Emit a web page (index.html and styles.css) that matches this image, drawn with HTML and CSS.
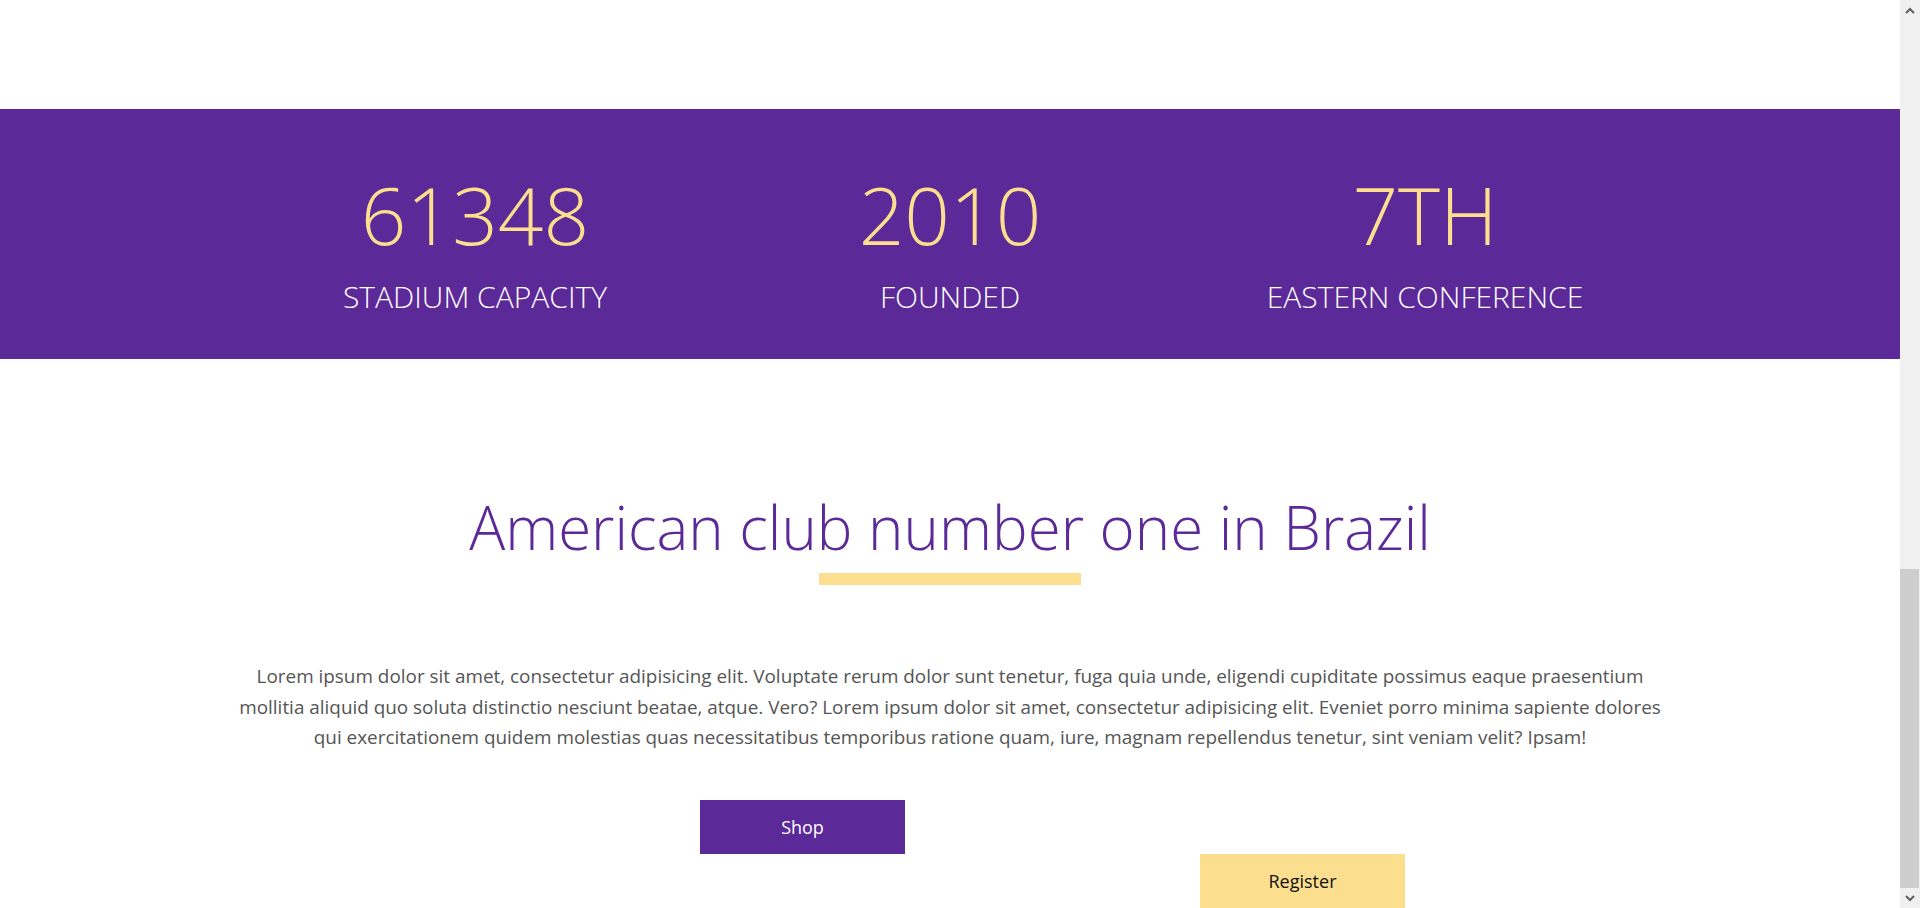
FILE: index.html
```html
<!DOCTYPE html>
<html lang="en">
<head>
<meta charset="utf-8">
<title>American club number one in Brazil</title>
<link rel="stylesheet" href="styles.css">
</head>
<body>
<main class="page">
  <section class="stats">
    <div class="stats-inner">
      <div class="stat">
        <span class="stat-value">61348</span>
        <span class="stat-label">STADIUM CAPACITY</span>
      </div>
      <div class="stat">
        <span class="stat-value">2010</span>
        <span class="stat-label">FOUNDED</span>
      </div>
      <div class="stat">
        <span class="stat-value">7TH</span>
        <span class="stat-label">EASTERN CONFERENCE</span>
      </div>
    </div>
  </section>
  <section class="about">
    <h1 class="about-title">American club number one in Brazil</h1>
    <div class="about-rule"></div>
    <p class="about-text">Lorem ipsum dolor sit amet, consectetur adipisicing elit. Voluptate rerum dolor sunt tenetur, fuga quia unde, eligendi cupiditate possimus eaque praesentium mollitia aliquid quo soluta distinctio nesciunt beatae, atque. Vero? Lorem ipsum dolor sit amet, consectetur adipisicing elit. Eveniet porro minima sapiente dolores qui exercitationem quidem molestias quas necessitatibus temporibus ratione quam, iure, magnam repellendus tenetur, sint veniam velit? Ipsam!</p>
    <div class="actions">
      <a class="btn btn-shop" href="#">Shop</a>
      <a class="btn btn-register" href="#">Register</a>
    </div>
  </section>
</main>
<div class="scrollbar" aria-hidden="true">
  <div class="sb-arrow">
    <svg width="10" height="7" viewBox="0 0 10 7"><polyline points="1,6 5,2 9,6" fill="none" stroke="#606060" stroke-width="2"/></svg>
  </div>
  <div class="sb-track">
    <div class="sb-thumb"></div>
  </div>
  <div class="sb-arrow">
    <svg width="10" height="7" viewBox="0 0 10 7"><polyline points="1,1 5,5 9,1" fill="none" stroke="#606060" stroke-width="2"/></svg>
  </div>
</div>
</body>
</html>
```
FILE: styles.css
```css
html,
body {
  height: 100%;
}
body {
  margin: 0;
  display: flex;
  overflow: hidden;
  font-family: "Open Sans", "Noto Sans", sans-serif;
  background: #ffffff;
}
.page {
  flex: 1;
  min-width: 0;
  padding-top: 109px;
}
.stats {
  background: #5c2999;
  padding: 50px 0 42px;
}
.stats-inner {
  width: 75%;
  margin: 0 auto;
  display: grid;
  grid-template-columns: repeat(3, 1fr);
  text-align: center;
}
.stat {
  display: flex;
  flex-direction: column;
  align-items: center;
  gap: 8px;
}
.stat-value {
  font-weight: 300;
  font-size: 80px;
  line-height: normal;
  color: #fbdf8e;
}
.stat-label {
  font-weight: 300;
  font-size: 30px;
  line-height: normal;
  color: #ffffff;
}
.about {
  padding-top: 127px;
  text-align: center;
}
.about-title {
  margin: 0;
  font-weight: 300;
  font-size: 60px;
  line-height: normal;
  color: #5c2999;
}
.about-rule {
  width: 262px;
  height: 12px;
  margin: 5px auto 0;
  background: #fbdf8e;
}
.about-text {
  width: 75%;
  margin: 76px auto 0;
  font-size: 18.9px;
  line-height: 30.6px;
  color: #555555;
}
.actions {
  margin-top: 47px;
  display: flex;
  flex-direction: column;
  align-items: flex-start;
  padding-left: 700px;
}
.btn {
  display: flex;
  align-items: center;
  justify-content: center;
  width: 205px;
  height: 54px;
  font-size: 18px;
  text-decoration: none;
}
.btn-shop {
  background: #5c2999;
  color: #ffffff;
}
.btn-register {
  margin-left: 500px;
  background: #fbdf8e;
  color: #111111;
}
.scrollbar {
  flex: 0 0 20px;
  height: 100%;
  display: flex;
  flex-direction: column;
  background: #f0f0f0;
}
.sb-arrow {
  flex: 0 0 20px;
  display: flex;
  align-items: center;
  justify-content: center;
}
.sb-track {
  flex: 1;
  display: flex;
  flex-direction: column;
  justify-content: flex-end;
}
.sb-thumb {
  height: 319px;
  margin-right: 1px;
  background: #cdcdcd;
}
```
